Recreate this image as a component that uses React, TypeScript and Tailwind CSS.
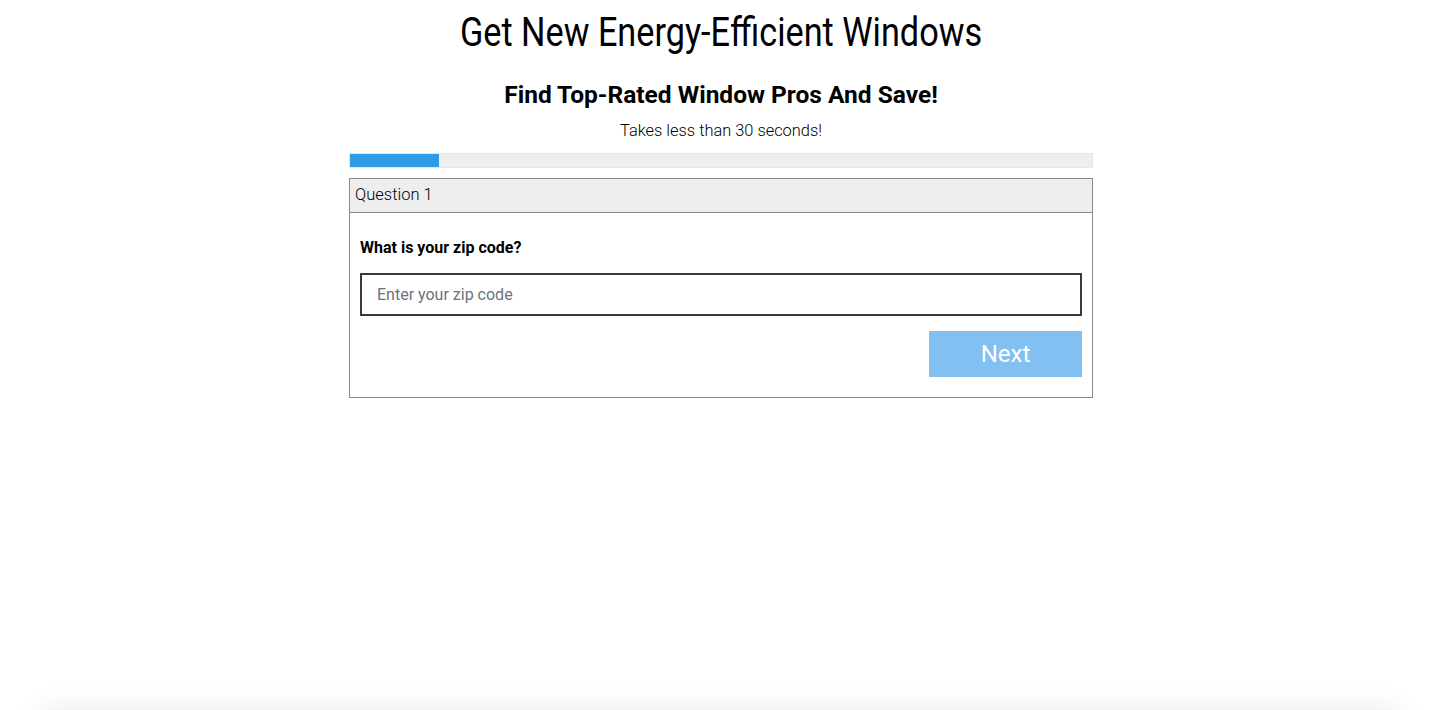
import { useState } from "react"

export default function App() {
  const [zip, setZip] = useState("")
  const progress = 12

  return (
    <div className="min-h-screen bg-white font-['Roboto',sans-serif] text-black">
      <div className="flex justify-center pl-[2px]">
        <div className="w-[744px] pt-[8px]">
          {/* Heading */}
          <h1 className="text-center text-[41px] font-normal leading-[48px] origin-center scale-x-[0.835] whitespace-nowrap">
            Get New Energy-Efficient Windows
          </h1>
          <h2 className="mt-[24px] text-center text-[24.5px] font-bold leading-[30px]">
            Find Top-Rated Window Pros And Save!
          </h2>
          <p className="mt-[10px] text-center text-[16.4px] font-light leading-[22px]">
            Takes less than 30 seconds!
          </p>

          {/* Progress */}
          <div className="mt-[11px] h-[15px] border border-[#e6e6e6] bg-[#eeeeee]">
            <div className="h-full bg-[#2d9be6]" style={{ width: `${progress}%` }} />
          </div>

          {/* Question card */}
          <div className="mt-[10px] border border-[#8a8a8a]">
            <div className="h-[34px] border-b border-[#8a8a8a] bg-[#eeeeee] px-[5px] pb-[3px] text-[16.5px] font-light leading-[31px]">
              Question 1
            </div>
            <div className="px-[10px] pb-[20px] pt-[25px]">
              <label className="block text-[16px] font-bold leading-[20px]">What is your zip code?</label>
              <input
                value={zip}
                onChange={(e) => setZip(e.target.value)}
                placeholder="Enter your zip code"
                className="mt-[15px] block h-[43px] w-full border-2 border-[#3a3a3a] px-[15px] text-[16px] outline-none placeholder:text-[#6b7280]"
              />
              <div className="mt-[15px] flex justify-end">
                <button className="h-[46px] w-[153px] bg-[#82c0f1] text-[24px] text-white">Next</button>
              </div>
            </div>
          </div>
        </div>
      </div>
      {/* footer shadow peeking from below the fold */}
      <div className="mx-[40px] mt-[312px] h-[60px] bg-white shadow-[0_0_30px_rgba(0,0,0,0.09)]" />
    </div>
  )
}
